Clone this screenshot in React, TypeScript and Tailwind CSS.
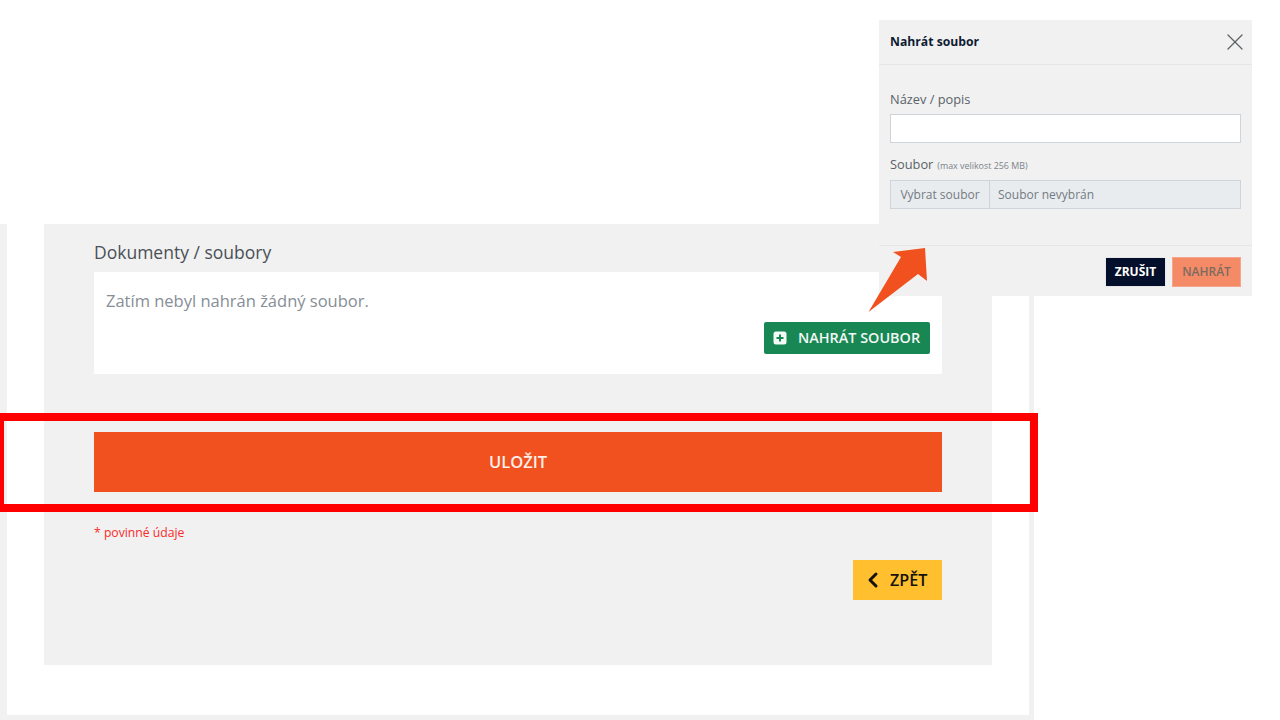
import { X, ChevronLeft } from "lucide-react";

export default function App() {
  return (
    <div className="relative h-[720px] w-[1280px] overflow-hidden bg-white pt-[224px] font-['Open_Sans',sans-serif]">
      {/* page shell */}
      <div className="h-[496px] w-[1034px] bg-[#f1f1f1] pb-[5px] pl-[7px] pr-[5px]">
        <div className="h-full bg-white pl-[37px] pr-[37px]">
          <div className="flex h-[441px] flex-col bg-[#f1f1f1] px-[50px]">
            <h2 className="mt-[16px] h-[32px] text-[17.5px] leading-[24px] text-[#495057]">Dokumenty / soubory</h2>
            <div className="flex h-[102px] flex-col bg-white pl-[12px] pr-[12px]">
              <p className="mt-[17px] text-[16.5px] leading-[24px] text-[#868e96]">Zatím nebyl nahrán žádný soubor.</p>
              <div className="mt-[9px] flex justify-end">
                <button className="flex h-[32px] w-[166px] items-center rounded-[2px] bg-[#198754] pl-[9px] text-[14.4px] font-semibold text-[#f2f8f5]">
                  <svg viewBox="0 0 14 14" className="mr-[11px] h-[14px] w-[14px] shrink-0">
                    <rect x="0.5" y="0.5" width="13" height="13" rx="2.5" fill="#f4faf7" />
                    <path d="M7 3.5v7M3.5 7h7" stroke="#198754" strokeWidth="2" />
                  </svg>
                  NAHRÁT SOUBOR
                </button>
              </div>
            </div>
            <button className="mt-[58px] h-[60px] w-full shrink-0 bg-[#f1511e] text-[16.5px] font-semibold text-[#fdf0ea]">ULOŽIT</button>
            <p className="mt-[32px] text-[12.2px] leading-[18px] text-[#fa2a2a]">* povinné údaje</p>
            <div className="mt-[18px] flex justify-end">
              <button className="flex h-[40px] w-[89px] items-center justify-start bg-[#ffbf2f] pl-[8px] text-[16.2px] font-semibold text-[#14120c]">
                <ChevronLeft size={24} strokeWidth={3} className="mr-[5px]" />
                ZPĚT
              </button>
            </div>
          </div>
        </div>
      </div>

      {/* dialog overlay */}
      <div className="absolute left-[879px] top-[20px] flex h-[276px] w-[373px] flex-col bg-[#f1f1f1]">
        <div className="flex h-[45px] items-center justify-between border-b border-[#e4e7ea] pl-[11px] pr-[3px]">
          <h3 className="text-[12.2px] font-bold text-[#0f1b33]">Nahrát soubor</h3>
          <X size={28} strokeWidth={1.1} className="text-[#5c6166]" />
        </div>
        <div className="h-[181px] border-b border-[#e4e7ea] pl-[11px] pr-[11px]">
          <label className="mt-[25px] block text-[12.8px] leading-[18px] text-[#5a6268]">Název / popis</label>
          <div className="mt-[6px] h-[29px] border border-[#ced4da] bg-white" />
          <div className="mt-[12px] flex h-[18px] items-baseline text-[12.8px] leading-[18px] text-[#5a6268]">
            Soubor
            <span className="ml-[4px] text-[8.9px] text-[#7b838a]">(max velikost 256 MB)</span>
          </div>
          <div className="mt-[7px] flex h-[29px] items-center border border-[#ced4da] bg-[#e9ecef] text-[12px] text-[#737b82]">
            <span className="flex h-full w-[99px] items-center justify-center border-r border-[#ced4da]">Vybrat soubor</span>
            <span className="pl-[8px]">Soubor nevybrán</span>
          </div>
        </div>
        <div className="flex justify-end gap-[6px] pl-[11px] pr-[11px] pt-[11px]">
          <button className="flex h-[30px] w-[61px] items-center justify-center border border-[#e8e8e8] bg-[#04102b] text-[12px] font-bold text-white">ZRUŠIT</button>
          <button className="flex h-[30px] w-[69px] items-center justify-center border border-[#f5a58c] bg-[#f48a66] text-[12px] font-semibold text-[#7c6a60]">NAHRÁT</button>
        </div>
      </div>

      {/* arrow */}
      <svg className="absolute left-[860px] top-[240px] h-[80px] w-[80px]" viewBox="0 0 80 80">
        <polygon points="8.5,72 41,17 33,12 65,8 67,41 58,34" fill="#f1511e" />
      </svg>

      {/* red highlight */}
      <div className="absolute left-[-4px] top-[413px] h-[99px] w-[1042px] border-8 border-[#ff0000]" />
    </div>
  );
}
